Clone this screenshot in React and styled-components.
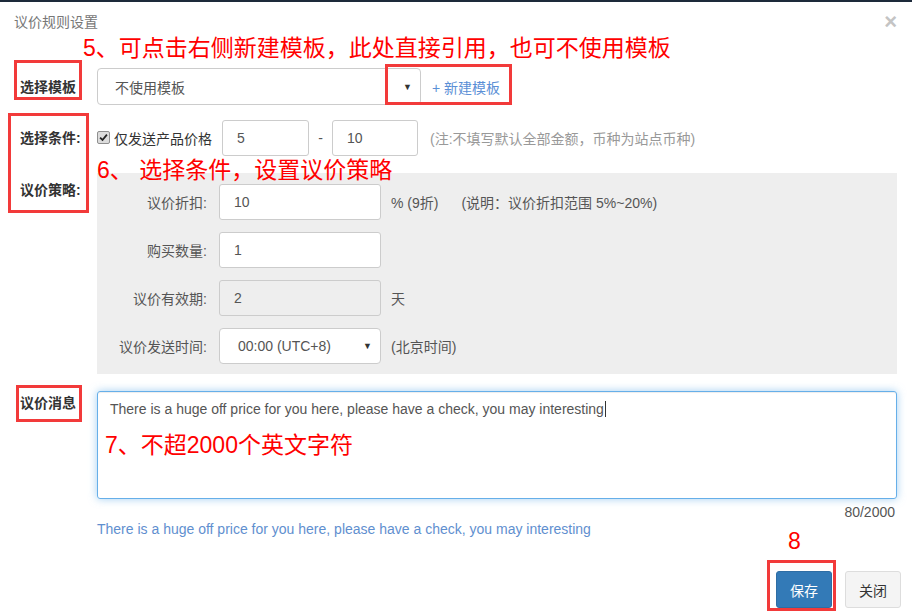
import styled, { createGlobalStyle } from "styled-components";

const GlobalStyle = createGlobalStyle`
  html, body {
    margin: 0;
    padding: 0;
    background: #ffffff;
  }
  body {
    font-family: "Liberation Sans", "Noto Sans CJK SC", sans-serif;
    font-size: 14px;
    color: #333333;
  }
  * {
    box-sizing: border-box;
  }
`;

const MESSAGE =
  "There is a huge off price for you here, please have a check, you may interesting";

export default function App() {
  return (
    <>
      <GlobalStyle />
      <SCModal>
        <SCHeader>
          <SCTitle>议价规则设置</SCTitle>
          <SCClose>×</SCClose>
        </SCHeader>

        <SCCallout>5、可点击右侧新建模板，此处直接引用，也可不使用模板</SCCallout>

        <SCRow $top={8}>
          <SCLabel>选择模板</SCLabel>
          <SCSelect $width={324} $height={37}>
            <span>不使用模板</span>
            <SCCaret>▼</SCCaret>
          </SCSelect>
          <SCLink>+ 新建模板</SCLink>
        </SCRow>

        <SCRow $top={15}>
          <SCLabel>选择条件:</SCLabel>
          <SCCheck>
            <svg width="9" height="9" viewBox="0 0 10 10">
              <path d="M1.2 5.2 L3.9 7.8 L8.8 1.8" fill="none" stroke="#222" strokeWidth="2" />
            </svg>
          </SCCheck>
          <SCText>仅发送产品价格</SCText>
          <SCInput $width={87} $gap={10}>5</SCInput>
          <SCDash>-</SCDash>
          <SCInput $width={86}>10</SCInput>
          <SCNote>(注:不填写默认全部金额，币种为站点币种)</SCNote>
        </SCRow>

        <SCRow $top={17} $align="flex-start">
          <SCLabel $offset={7}>议价策略:</SCLabel>
          <SCPanel>
            <SCPanelRow>
              <SCPanelLabel>议价折扣:</SCPanelLabel>
              <SCInput $width={162}>10</SCInput>
              <SCSuffix>% (9折)</SCSuffix>
              <SCSuffix $gap={23}>(说明：议价折扣范围 5%~20%)</SCSuffix>
            </SCPanelRow>
            <SCPanelRow>
              <SCPanelLabel>购买数量:</SCPanelLabel>
              <SCInput $width={162}>1</SCInput>
            </SCPanelRow>
            <SCPanelRow>
              <SCPanelLabel>议价有效期:</SCPanelLabel>
              <SCInput $width={162} $disabled>2</SCInput>
              <SCSuffix>天</SCSuffix>
            </SCPanelRow>
            <SCPanelRow>
              <SCPanelLabel>议价发送时间:</SCPanelLabel>
              <SCSelect $width={162} $height={36} $pad={18}>
                <span>00:00 (UTC+8)</span>
                <SCCaret>▼</SCCaret>
              </SCSelect>
              <SCSuffix>(北京时间)</SCSuffix>
            </SCPanelRow>
          </SCPanel>
        </SCRow>

        <SCRow $top={17} $align="flex-start">
          <SCLabel $offset={2}>议价消息</SCLabel>
          <SCTextArea>
            {MESSAGE}
            <SCCursor />
          </SCTextArea>
        </SCRow>

        <SCCounter>80/2000</SCCounter>
        <SCPreview>{MESSAGE}</SCPreview>

        <SCFooter>
          <SCButton $primary>保存</SCButton>
          <SCButton>关闭</SCButton>
        </SCFooter>

        <SCMark $x={14} $y={60} $w={68} $h={40} />
        <SCMark $x={8} $y={113} $w={81} $h={100} />
        <SCMark $x={385} $y={64} $w={127} $h={41} />
        <SCMark $x={16} $y={385} $w={66} $h={37} />
        <SCMark $x={767} $y={560} $w={69} $h={51} />

        <SCFloatNote $x={97} $y={157}>6、 选择条件，设置议价策略</SCFloatNote>
        <SCFloatNote $x={105} $y={432}>7、不超2000个英文字符</SCFloatNote>
        <SCFloatNote $x={788} $y={528}>8</SCFloatNote>
      </SCModal>
    </>
  );
}

const SCModal = styled.div`
  position: relative;
  width: 912px;
  height: 615px;
  border-top: 2px solid #1d2a3a;
  padding-right: 15px;
  overflow: hidden;
`;

const SCHeader = styled.div`
  display: flex;
  justify-content: space-between;
  align-items: center;
  height: 30px;
  padding: 10px 0 0 14px;
`;

const SCTitle = styled.div`
  font-size: 14px;
  line-height: 20px;
  color: #777777;
`;

const SCClose = styled.div`
  font-family: "Liberation Sans", sans-serif;
  font-size: 22px;
  font-weight: bold;
  line-height: 20px;
  color: #c4c4c4;
`;

const SCCallout = styled.div`
  margin: 4px 0 0 83px;
  font-size: 23px;
  line-height: 24px;
  color: #ff0000;
  white-space: nowrap;
`;

const SCRow = styled.div`
  display: flex;
  align-items: ${(p) => p.$align || "center"};
  margin-top: ${(p) => p.$top}px;
`;

const SCLabel = styled.div`
  flex: 0 0 97px;
  padding-left: 20px;
  margin-top: ${(p) => p.$offset || 0}px;
  font-size: 14px;
  line-height: 20px;
  font-weight: bold;
  color: #333333;
  white-space: nowrap;
`;

const SCSelect = styled.div`
  display: flex;
  align-items: center;
  justify-content: space-between;
  width: ${(p) => p.$width}px;
  height: ${(p) => p.$height}px;
  padding: 0 8px 0 ${(p) => p.$pad || 17}px;
  background: #ffffff;
  border: 1px solid #cccccc;
  border-radius: 4px;
  font-size: 14px;
  color: #555555;
`;

const SCCaret = styled.span`
  font-size: 9px;
  color: #333333;
`;

const SCLink = styled.span`
  margin-left: 11px;
  font-size: 14px;
  color: #5b8fd6;
`;

const SCCheck = styled.span`
  display: inline-flex;
  align-items: center;
  justify-content: center;
  width: 13px;
  height: 13px;
  margin-top: -2px;
  border: 1px solid #8f8f8f;
  border-radius: 2px;
  background: #dcdcdc;
`;

const SCText = styled.span`
  margin-left: 4px;
  font-size: 14px;
  color: #333333;
`;

const SCInput = styled.div`
  display: flex;
  align-items: center;
  width: ${(p) => p.$width}px;
  height: 36px;
  margin-left: ${(p) => p.$gap || 0}px;
  padding-left: 14px;
  background: ${(p) => (p.$disabled ? "#eeeeee" : "#ffffff")};
  border: 1px solid #cccccc;
  border-radius: 3px;
  font-size: 14px;
  color: #555555;
`;

const SCDash = styled.span`
  width: 23px;
  text-align: center;
  color: #555555;
`;

const SCNote = styled.span`
  margin-left: 12px;
  font-size: 14px;
  color: #999999;
  white-space: nowrap;
`;

const SCPanel = styled.div`
  flex: 1;
  display: flex;
  flex-direction: column;
  gap: 12px;
  padding: 11px 0 10px;
  background: #eeeeee;
`;

const SCPanelRow = styled.div`
  display: flex;
  align-items: center;
  height: 36px;
`;

const SCPanelLabel = styled.div`
  width: 110px;
  margin-right: 12px;
  text-align: right;
  font-size: 14px;
  color: #555555;
  white-space: nowrap;
`;

const SCSuffix = styled.span`
  margin-left: ${(p) => p.$gap || 10}px;
  font-size: 14px;
  color: #555555;
  white-space: nowrap;
`;

const SCTextArea = styled.div`
  flex: 1;
  height: 108px;
  padding: 8px 12px;
  border: 1px solid #66afe9;
  border-radius: 3px;
  box-shadow: inset 0 1px 1px rgba(0, 0, 0, 0.075), 0 0 8px rgba(102, 175, 233, 0.6);
  font-size: 14px;
  line-height: 18px;
  color: #555555;
`;

const SCCursor = styled.span`
  display: inline-block;
  width: 1px;
  height: 16px;
  margin-left: 1px;
  vertical-align: -3px;
  background: #333333;
`;

const SCCounter = styled.div`
  margin-top: 5px;
  text-align: right;
  padding-right: 2px;
  font-size: 14px;
  line-height: 16px;
  color: #555555;
`;

const SCPreview = styled.div`
  margin-left: 97px;
  font-size: 14px;
  line-height: 18px;
  color: #5f8fcf;
  white-space: nowrap;
`;

const SCFooter = styled.div`
  display: flex;
  justify-content: flex-end;
  gap: 13px;
  margin: 33px -4px 0 0;
`;

const SCButton = styled.button`
  width: 56px;
  height: 37px;
  padding: 0;
  font-family: inherit;
  font-size: 14px;
  border-radius: 3px;
  border: 1px solid ${(p) => (p.$primary ? "#2e6da4" : "#dddddd")};
  background: ${(p) => (p.$primary ? "#337ab7" : "#f4f4f4")};
  color: ${(p) => (p.$primary ? "#ffffff" : "#333333")};
`;

const SCMark = styled.div`
  position: absolute;
  left: ${(p) => p.$x}px;
  top: ${(p) => p.$y - 2}px;
  width: ${(p) => p.$w}px;
  height: ${(p) => p.$h}px;
  border: 3px solid #f23a3a;
  pointer-events: none;
`;

const SCFloatNote = styled.div`
  position: absolute;
  left: ${(p) => p.$x}px;
  top: ${(p) => p.$y - 2}px;
  font-size: 23px;
  line-height: 26px;
  color: #ff0000;
  white-space: nowrap;
`;
